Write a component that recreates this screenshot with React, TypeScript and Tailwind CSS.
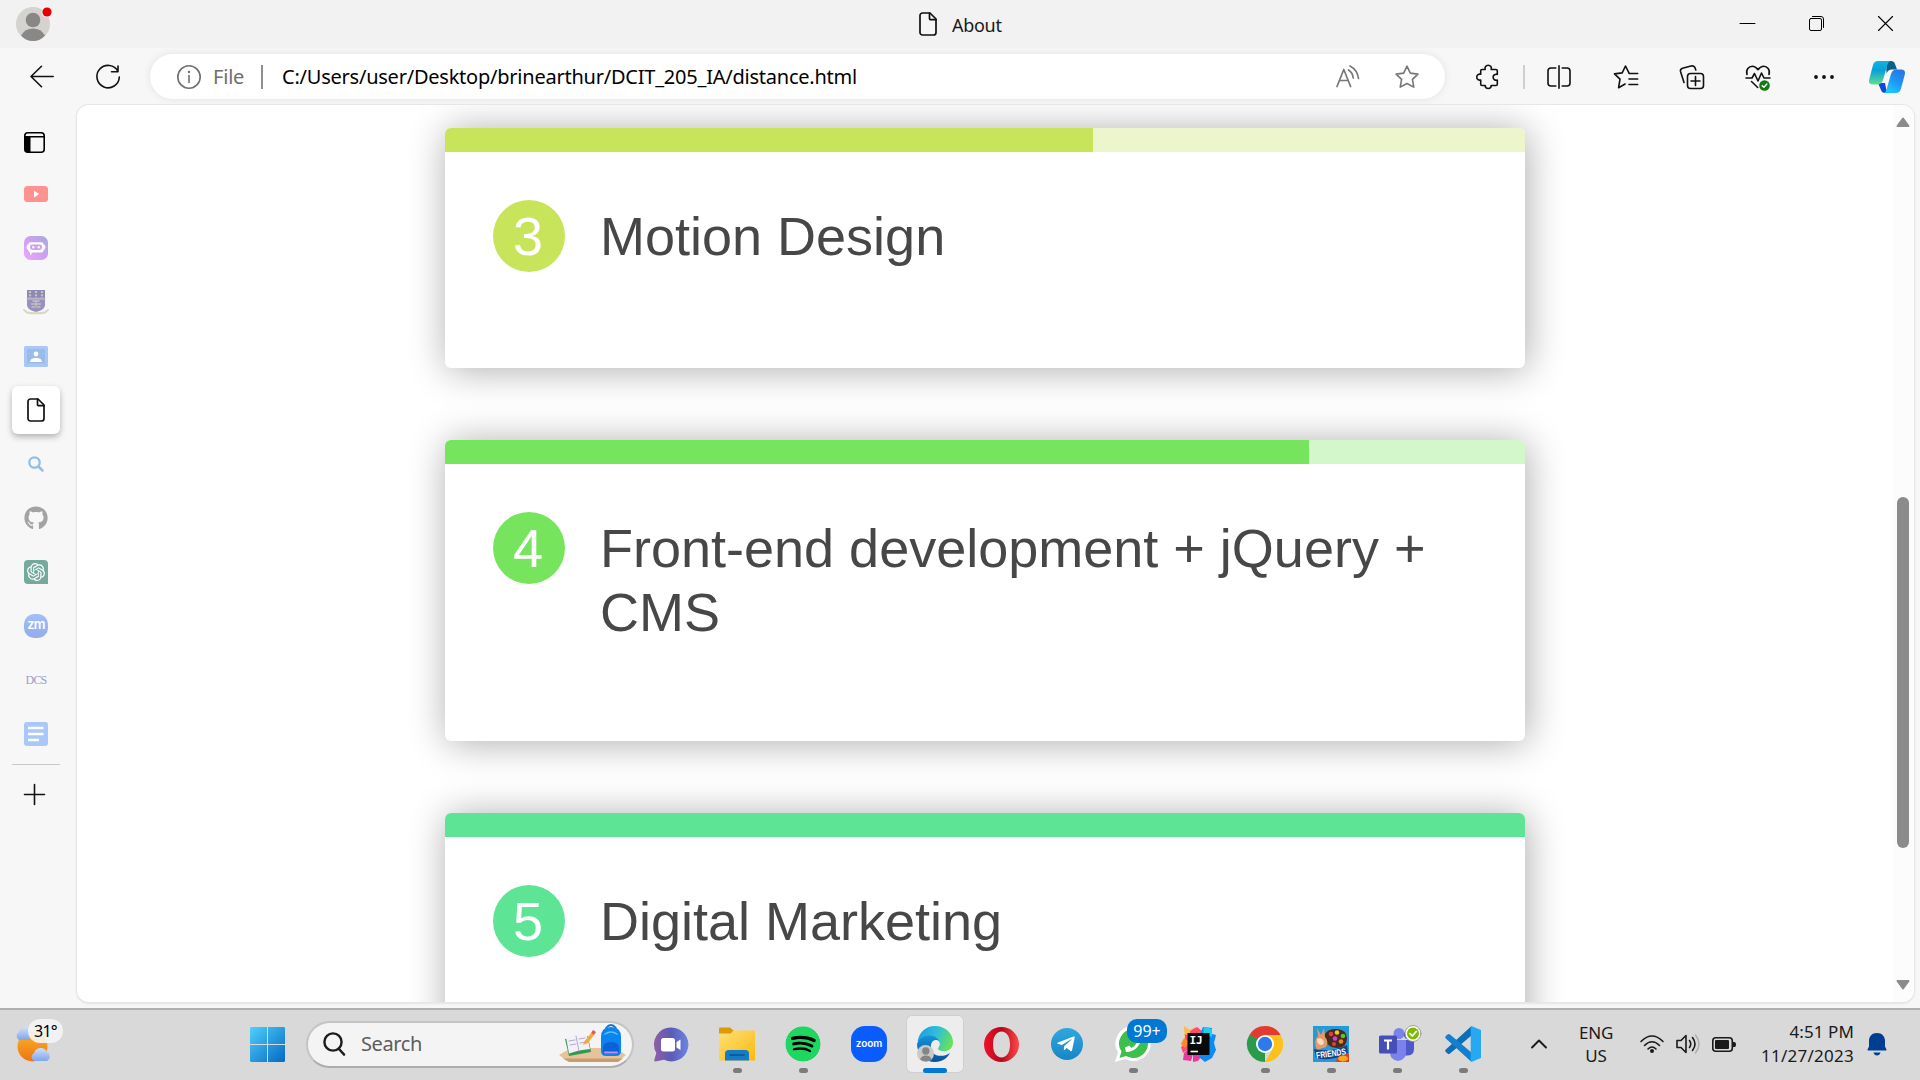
import React from "react";
import { FaGithub, FaSpotify, FaTelegramPlane, FaPhoneAlt } from "react-icons/fa";
import { SiOpenai } from "react-icons/si";

type P = { children: React.ReactNode; className?: string; w: number; h?: number; vb?: string };

function Svg({ children, className = "", w, h = w, vb }: P) {
  return (
    <svg
      width={w}
      height={h}
      viewBox={vb ?? `0 0 ${w} ${h}`}
      className={`block shrink-0 overflow-visible ${className}`}
      fill="none"
      stroke="none"
      strokeLinecap="round"
      strokeLinejoin="round"
    >
      {children}
    </svg>
  );
}

/* ---------- title bar ---------- */

function FileIcon() {
  return (
    <Svg w={18} h={24}>
      <path d="M3.500 1H11l6 6v13.500a2.500 2.500 0 0 1-2.500 2.500h-11A2.500 2.500 0 0 1 1 20.500v-17A2.500 2.500 0 0 1 3.500 1z" fill="#fff" fillOpacity=".35" stroke="#111" strokeWidth="1.700" />
      <path d="M10.500 1v5.500a1.200 1.200 0 0 0 1.200 1.200H17" stroke="#111" strokeWidth="1.700" />
    </Svg>
  );
}

function TitleBar() {
  return (
    <header className="flex h-12 items-center bg-[#f2f2f2]">
      <div className="ml-4 w-[903px]">
        <Svg w={36}>
          <circle cx="17" cy="18" r="17" fill="#d5d3d0" />
          <circle cx="17" cy="14" r="7.300" fill="#8a8886" />
          <path d="M5 29.500Q9 22.500 17 22.500T29 29.500Q24 35 17 35T5 29.500z" fill="#8a8886" />
          <circle cx="31" cy="6" r="5.500" fill="#f2f2f2" />
          <circle cx="31" cy="6" r="4.600" fill="#e30000" />
        </Svg>
      </div>
      <FileIcon />
      <span className="ml-[15px] mt-0.5 w-[788px] text-[18px] tracking-[-0.3px] text-[#1a1a1a]">About</span>
      <div className="flex h-12 gap-[54px]">
        <Svg w={15} h={48}><path d="M0 23.500h15" stroke="#000" strokeWidth="1" /></Svg>
        <Svg w={15} h={48}>
          <rect x=".5" y="18.500" width="12" height="12" rx="1.500" stroke="#000" />
          <path d="M3.500 16.500h8.500a2.500 2.500 0 0 1 2.500 2.500v8.500" stroke="#000" />
        </Svg>
        <Svg w={15} h={48}><path d="M.5 16.500l14 14M14.500 16.500l-14 14" stroke="#000" strokeWidth="1.100" /></Svg>
      </div>
    </header>
  );
}

/* ---------- toolbar ---------- */

function Toolbar() {
  return (
    <div className="flex h-14 items-center bg-[#f7f7f7] pt-px">
      <div className="ml-[30px] w-[66px]">
        <Svg w={24}><path d="M23.200 11.500H1M11.500 1.300L1 11.500l10.500 10.200" stroke="#111" strokeWidth="1.600" /></Svg>
      </div>
      <div className="w-[54px]">
        <Svg w={24}>
          <path d="M22 6.300A11.200 11.200 0 1 0 23.300 12M22 1v5.800h-6.500" stroke="#111" strokeWidth="1.600" />
        </Svg>
      </div>
      <div className="flex h-[45px] w-[1295px] items-center rounded-full bg-white shadow-[0_0_8px_rgba(0,0,0,0.09)]">
        <Svg w={24} className="ml-[27px]">
          <circle cx="12" cy="12" r="11.200" stroke="#707070" strokeWidth="1.600" />
          <path d="M12 10.500v7" stroke="#707070" strokeWidth="1.600" />
          <circle cx="12" cy="7" r="1.200" fill="#707070" />
        </Svg>
        <span className="ml-3 w-[48px] text-[20px] tracking-[-0.2px] text-[#6e6e6e]">File</span>
        <div className="h-6 w-[2px] bg-[#8f8f8f]" />
        <span className="ml-[19px] w-[1054px] whitespace-nowrap text-[20px] tracking-[-0.23px] text-black">
          C:/Users/user/Desktop/brinearthur/DCIT_205_IA/distance.html
        </span>
        <Svg w={24}>
          <path d="M1 21.500L7.800 4.500l6.800 17M3.500 15.500h8.600M12.500 5Q17 8 17.200 13M14 1Q21.500 5 22.500 13.500" stroke="#777" strokeWidth="1.700" />
        </Svg>
        <Svg w={24} className="ml-[35px]">
          <path d="M12 1.200l3.300 6.900 7.600 1-5.500 5.300 1.400 7.700L12 18.500l-6.800 3.600 1.400-7.700L1.100 9.100l7.600-1z" stroke="#777" strokeWidth="1.600" />
        </Svg>
      </div>
      <Svg w={24} className="ml-[31px]">
        <path d="M6 4.500h3.200a3.200 3.200 0 1 1 6 0H20q1.300 0 1.300 1.300V9.500a3 3 0 1 0 0 5.500v4.200q0 1.300-1.300 1.300h-4.800a3 3 0 0 1-6 0H6q-1.300 0-1.300-1.300V15a3 3 0 1 1 0-5.700V5.800Q4.700 4.500 6 4.500z" stroke="#111" strokeWidth="1.600" />
      </Svg>
      <div className="ml-[23px] h-6 w-[2px] bg-[#cfcfcf]" />
      <Svg w={24} className="ml-[22px]">
        <path d="M8.800 3H4a3 3 0 0 0-3 3v12a3 3 0 0 0 3 3h4.800M15.200 3H20a3 3 0 0 1 3 3v12a3 3 0 0 1-3 3h-4.800M12 .8v22.400" stroke="#111" strokeWidth="1.600" />
      </Svg>
      <Svg w={26} h={24} className="ml-[42px]">
        <path d="M15.800 7.700L12.500 1 9.200 7.900l-7.700 1 5.500 5.300-1.400 8.500 6.500-3.700M16 8.500h8.700M16 14h8.700M16 19.500h8.700" stroke="#111" strokeWidth="1.600" />
      </Svg>
      <Svg w={26} h={24} className="ml-10">
        <rect x="8.500" y="8.500" width="16" height="15" rx="3" stroke="#111" strokeWidth="1.600" />
        <path d="M16.500 11.500v9M12 16h9M5 17.500L1.500 6.500Q1 4 3.500 3.200L12 1q2.500-.6 3.800 1.200l1 2.800" stroke="#111" strokeWidth="1.600" />
      </Svg>
      <Svg w={26} h={24} className="ml-10">
        <path d="M2 9.500C.5 4.500 4 1.300 7.300 1.300c2.500 0 4.200 1.500 5.700 3.400 1.500-1.900 3.200-3.400 5.700-3.400C22 1.300 25.500 4.500 24 9.500M1 13h6l2.500-4.500 3.500 7.500 3.500-8 2.500 5h6M6.500 16.500l6.200 6" stroke="#111" strokeWidth="1.600" />
        <circle cx="19.500" cy="20.500" r="5.300" fill="#107c10" />
        <path d="M17.200 20.700l1.700 1.600 3-3.300" stroke="#fff" strokeWidth="1.400" />
      </Svg>
      <Svg w={20} h={24} className="ml-[43px]">
        <circle cx="2" cy="12" r="1.900" fill="#111" />
        <circle cx="10" cy="12" r="1.900" fill="#111" />
        <circle cx="18" cy="12" r="1.900" fill="#111" />
      </Svg>
      <Svg w={36} h={32} className="ml-[35px]">
        <defs>
          <linearGradient id="cpA" x1="0" y1="0" x2="0" y2="1">
            <stop offset="0" stopColor="#11b5d8" /><stop offset=".4" stopColor="#08a0dc" /><stop offset="1" stopColor="#5fe08a" />
          </linearGradient>
          <linearGradient id="cpB" x1="1" y1="0" x2=".4" y2="1">
            <stop offset="0" stopColor="#2f6fda" /><stop offset=".5" stopColor="#1e90f5" /><stop offset="1" stopColor="#1cc8ff" />
          </linearGradient>
        </defs>
        <path d="M17 0h5q3 0 4 3l2 5.500h-5q-4 0-5.500 4z" fill="#0c5f8a" />
        <path d="M9 22h7l2 10h-2q-3 0-4-3z" fill="#1545d8" />
        <path d="M9 0h13q-2.500 0-3.500 3.500L14 19q-1.500 4.500-6 4.500H4q-5 0-3.800-5L4 4Q5.200 0 9 0z" fill="url(#cpA)" />
        <path d="M27 8.500h5q5 0 3.800 5L32 27.500Q30.800 32 27 32H14q2.500 0 3.500-3.500L22 13q1.500-4.500 5-4.500z" fill="url(#cpB)" />
      </Svg>
    </div>
  );
}

/* ---------- vertical tabs ---------- */

function Tab({ children, active = false }: { children: React.ReactNode; active?: boolean }) {
  return (
    <div className="flex h-[54px] items-center justify-center">
      {active ? (
        <div className="flex h-12 w-12 items-center justify-center rounded-[6px] bg-white shadow-[0_3px_6px_rgba(0,0,0,0.28)]">{children}</div>
      ) : (
        children
      )}
    </div>
  );
}

function Sidebar() {
  return (
    <nav className="flex w-[77px] shrink-0 flex-col bg-[#f7f7f7] pr-[5px] pt-3">
      <div className="flex h-[50px] items-center justify-center pr-[3px]">
        <Svg w={21}>
          <rect x=".8" y=".8" width="19.400" height="19.400" rx="3" stroke="#000" strokeWidth="1.600" />
          <path d="M1 5h5.500v15H3a2 2 0 0 1-2-2z" fill="#000" />
          <path d="M1 4.800h19" stroke="#000" strokeWidth="1.500" />
        </Svg>
      </div>
      <Tab>
        <Svg w={24} h={16}><rect width="24" height="16" rx="3.500" fill="#ff9191" /><path d="M10 4.800v6.600l5.300-3.300z" fill="#fff" /></Svg>
      </Tab>
      <Tab>
        <Svg w={24}>
          <defs><linearGradient id="poe" x1="1" y1="0" x2="0" y2="1"><stop stopColor="#a3abe0" /><stop offset=".5" stopColor="#cfa0f0" /><stop offset="1" stopColor="#eaa8ff" /></linearGradient></defs>
          <rect width="24" height="24" rx="6.500" fill="url(#poe)" />
          <path d="M6.500 6.300h11q2 0 2.200 2.200 1.800.4 1.800 2.700t-1.800 2.700q-.2 2.700-2.700 2.700H8.500L6 19.500v-3q-1.600-.6-1.800-2.600-1.700-.4-1.700-2.700t1.700-2.700q.2-2.200 2.300-2.200z" fill="#fff" />
          <rect x="6" y="8.400" width="12" height="5.600" rx="2.400" fill="#cda0ee" />
          <circle cx="9.300" cy="11.200" r="1.200" fill="#fff" /><circle cx="14.700" cy="11.200" r="1.200" fill="#fff" />
        </Svg>
      </Tab>
      <Tab>
        <Svg w={24}>
          <path d="M3 0h18v15q0 5-9 7-9-2-9-7z" fill="#9691bf" />
          <path d="M3 0h18v7H3z" fill="#8c89b5" />
          <path d="M6 1v7M12 1v7M18 1v7" stroke="#c9bfc4" strokeWidth="2.200" strokeDasharray="2 1.200" strokeLinecap="butt" />
          <path d="M3 8.800h18M9 11h6M7.500 14h9M8 17h2.500M13.500 17H16M12 12v5" stroke="#c8bfc0" strokeWidth="1.300" />
          <path d="M0 20l3 2.500q9 1.700 18 0l3-2.500" stroke="#dcd5c4" strokeWidth="2" />
        </Svg>
      </Tab>
      <Tab>
        <Svg w={24} h={21}>
          <rect width="24" height="21" rx="1.500" fill="#a9c7f7" /><rect x="3" y="3" width="18" height="14.500" fill="#9bbbe9" />
          <circle cx="12" cy="8" r="2.400" fill="#fff" /><path d="M6 16q0-4 6-4t6 4z" fill="#fff" />
        </Svg>
      </Tab>
      <Tab active><FileIcon /></Tab>
      <Tab>
        <Svg w={16}><circle cx="6.500" cy="6.500" r="5.200" stroke="#93bfe3" strokeWidth="2.300" /><path d="M10.500 10.500l4 4" stroke="#93bfe3" strokeWidth="2.500" /></Svg>
      </Tab>
      <Tab><FaGithub size={24} color="#a2a3a5" /></Tab>
      <Tab>
        <div className="flex h-6 w-6 items-center justify-center rounded-[4px] rounded-br-none bg-[#74aa9c]"><SiOpenai size={18} color="#fff" /></div>
      </Tab>
      <Tab>
        <div className="flex h-6 w-6 items-center justify-center rounded-[10px] bg-linear-to-b from-[#a2bffb] to-[#92ade9] pb-[3px] font-['Inter'] text-[13px] font-semibold leading-none tracking-[-0.7px] text-white">zm</div>
      </Tab>
      <Tab><span className="font-['Liberation_Serif'] text-[12px] tracking-[-0.8px] text-[#9b9bd0]">DCS</span></Tab>
      <Tab>
        <Svg w={24}><rect width="24" height="24" rx="3" fill="#a9c7f8" /><path d="M4 6h15.500M4 12h15.500M4 18h11" stroke="#fff" strokeWidth="2.600" strokeLinecap="butt" /></Svg>
      </Tab>
      <div className="mx-3 mt-[3px] h-px bg-[#c8c8c8]" />
      <div className="mt-[19px] flex justify-center pr-[3px]">
        <Svg w={21}><path d="M10.500.5v20M.5 10.500h20" stroke="#111" strokeWidth="1.600" /></Svg>
      </div>
    </nav>
  );
}

/* ---------- page content ---------- */

type Course = { n: number; title: string; height: string; fill: string; track: string; width: string };

const courses: Course[] = [
  { n: 3, title: "Motion Design", height: "h-[240px]", fill: "bg-[#c8e45b]", track: "bg-[#ecf5cb]", width: "w-[60%]" },
  { n: 4, title: "Front-end development + jQuery + CMS", height: "h-[301px]", fill: "bg-[#76e55d]", track: "bg-[#d3f6cb]", width: "w-[80%]" },
  { n: 5, title: "Digital Marketing", height: "h-[301px]", fill: "bg-[#5de595]", track: "bg-[#5de595]", width: "w-full" },
];

function CourseCard({ c }: { c: Course }) {
  return (
    <article className={`w-[1080px] shrink-0 overflow-hidden rounded-[6px] bg-white shadow-[2px_2px_38px_rgba(0,0,0,0.33)] ${c.height}`}>
      <div className={`h-6 ${c.track}`}>
        <div className={`h-6 ${c.fill} ${c.width}`} />
      </div>
      <div className="flex gap-[35px] px-12 pt-12 font-['Liberation_Sans',sans-serif] text-[54px]">
        <div className={`flex h-[72px] w-[72px] shrink-0 items-center justify-center rounded-full pr-[2px] text-white ${c.fill}`}>{c.n}</div>
        <h2 className="pt-1 leading-[64px] text-[#474747]">{c.title}</h2>
      </div>
    </article>
  );
}

function Page() {
  return (
    <main className="mr-[6px] flex h-[897px] flex-1 overflow-hidden rounded-[12px] bg-white shadow-[0_0_0_1px_#e6e6e6,0_1px_3px_rgba(0,0,0,0.15)]">
      <div className="flex flex-1 flex-col items-center gap-[72px] overflow-hidden pl-0 pt-[23px]">
        {courses.map((c) => <CourseCard key={c.n} c={c} />)}
      </div>
      <div className="flex w-[21px] flex-col items-center bg-[#fcfcfc] pr-px pt-3">
        <Svg w={14} h={10}><path d="M7 1.500l5.500 7.500h-11z" fill="#8b8b8b" stroke="#8b8b8b" strokeWidth="2" /></Svg>
        <div className="mt-[370px] h-[351px] w-3 rounded-full bg-[#8b8b8b]" />
        <Svg w={14} h={10} className="mt-[132px]"><path d="M7 8.500L1.500 1h11z" fill="#8b8b8b" stroke="#8b8b8b" strokeWidth="2" /></Svg>
      </div>
    </main>
  );
}

/* ---------- taskbar ---------- */

function TaskApp({ children, running = false, active = false }: { children: React.ReactNode; running?: boolean; active?: boolean }) {
  return (
    <div className="flex w-[66px] justify-center">
      <div className={`relative flex h-[56px] w-[56px] items-center justify-center rounded-[5px] ${active ? "bg-[#ededed] shadow-[0_0_0_1px_#cfcfcf]" : ""}`}>
        {children}
        {running && <div className={`absolute bottom-[-1px] h-[5px] rounded-full ${active ? "w-6 bg-[#0078d4]" : "w-[9px] bg-[#7b7b7b]"}`} />}
      </div>
    </div>
  );
}

function Apps() {
  return (
    <>
      <TaskApp>
        <Svg w={35}>
          <defs><linearGradient id="chat" x1="0" x2="1"><stop stopColor="#8d5fa5" /><stop offset=".5" stopColor="#5b5bb8" /><stop offset="1" stopColor="#6d86e0" /></linearGradient></defs>
          <path d="M17.500.5a17 17 0 1 1-7.500 32.300L1.500 34.500Q0 34.500.3 33l2-7A17 17 0 0 1 17.500.5z" fill="url(#chat)" />
          <rect x="7" y="11" width="14" height="13.500" rx="2.500" fill="#fff" /><path d="M22.500 15l4-2.500v10.500l-4-2.500z" fill="#fff" />
        </Svg>
      </TaskApp>
      <TaskApp running>
        <Svg w={36} h={34}>
          <defs><linearGradient id="fold" x1="0" y1="0" x2="1" y2="1"><stop stopColor="#ffe077" /><stop offset="1" stopColor="#fbb90f" /></linearGradient></defs>
          <path d="M0 1.500Q0 .5 1 .5h10l4 3.500v5H0z" fill="#dc9a06" />
          <path d="M0 6.500h11.500l3-3H36v30H0z" fill="url(#fold)" />
          <path d="M6 33.500v-7q0-3.500 3.500-3.500h17q3.500 0 3.500 3.500v7z" fill="#147cc5" /><path d="M11 28h14" stroke="#0b4f94" strokeWidth="1.600" />
        </Svg>
      </TaskApp>
      <TaskApp running>
        <div className="flex h-[34px] w-[34px] items-center justify-center rounded-full bg-black"><FaSpotify size={36} color="#1ed760" className="shrink-0" /></div>
      </TaskApp>
      <TaskApp>
        <div className="flex h-9 w-9 items-center justify-center rounded-[14px] bg-[#0b5cff] pb-[3px] font-['Inter'] text-[10px] font-semibold leading-none text-white">zoom</div>
      </TaskApp>
      <TaskApp running active>
        <Svg w={36}>
          <defs>
            <linearGradient id="edA" x1="0" y1=".3" x2="1" y2=".6"><stop stopColor="#1c9de8" /><stop offset=".5" stopColor="#30c0d5" /><stop offset="1" stopColor="#6be352" /></linearGradient>
            <linearGradient id="edB" x1="0" y1="0" x2="0" y2="1"><stop stopColor="#1793d9" /><stop offset="1" stopColor="#0a4f9c" /></linearGradient>
          </defs>
          <path d="M.5 16C2 6 9 0 18 0c11 0 18 8 18 16 0 6-4 9.500-9.500 9.500-4 0-6-1.500-6-2.500 0-1.200 2-2 2-5C22.500 12 14 8.500.5 16z" fill="url(#edA)" />
          <path d="M0 18C3 10 12 7.500 18 11c4 2 5 5 4.500 7.500-.8-3-7-4.500-8.500 1.500-2 9 10 13 19 7-3 5.500-8 9-15 9C8 36 0 28 0 18z" fill="url(#edB)" />
          <path d="M14 21c-.5-6 4-8 7-6.500 2.500 1.500 2 4.500.8 6-2 2.500 0 4.500 4.700 5 3 .2 5-.7 6.500-1.200.8 1-.5 2.700-2 3-8 2.500-16-.8-17-6.300z" fill="#ededed" />
          <circle cx="8.500" cy="27.500" r="8.500" fill="#c9c9c9" /><circle cx="8.800" cy="25" r="3.700" fill="#858585" /><path d="M3 33.500q1.500-4 6-4t5.500 4q-5 3.800-11.500 0z" fill="#858585" />
        </Svg>
      </TaskApp>
      <TaskApp>
        <Svg w={35}>
          <defs><linearGradient id="op" x1="0" x2="1"><stop stopColor="#f0142a" /><stop offset=".5" stopColor="#b8061a" /><stop offset="1" stopColor="#ff4a4a" /></linearGradient></defs>
          <path fillRule="evenodd" d="M17.500 0a17.500 17.500 0 1 1 0 35 17.500 17.500 0 0 1 0-35zm0 4.500c-5 0-8.500 5-8.500 13s3.500 13 8.500 13 8.500-5 8.500-13-3.500-13-8.500-13z" fill="url(#op)" />
        </Svg>
      </TaskApp>
      <TaskApp>
        <div className="flex h-8 w-8 items-center justify-center rounded-full bg-linear-to-b from-[#30a7e0] to-[#1686c4] pr-[2px]"><FaTelegramPlane size={20} color="#fff" /></div>
      </TaskApp>
      <TaskApp running>
        <Svg w={36}>
          <path d="M18.500 0a17.500 17.500 0 1 1-8.300 33L0 36l3-9.500A17.500 17.500 0 0 1 18.500 0z" fill="#fff" />
          <path d="M18.500 3a14.500 14.500 0 1 1-7.300 27L4.500 31.800l2-6.300A14.500 14.500 0 0 1 18.500 3z" fill="#3cbf4d" />
        </Svg>
        <FaPhoneAlt size={16} color="#fff" className="absolute -scale-x-100" />
        <div className="absolute left-[22px] top-[3px] flex h-6 w-10 items-center justify-center rounded-[10px] bg-[#0078d4] pb-px text-[16px] text-white">99+</div>
      </TaskApp>
      <TaskApp>
        <Svg w={36}>
          <path d="M3 0l6 4 5-3 3 4v14H4z" fill="#ffb84a" />
          <path d="M9 5l7-4 5 4v10H9zM4 8l6 3v10l-8 6-2-6 4-3z" fill="#ff4b6e" />
          <path d="M3 27l9-9v10l-2 7-8-1zM12 28h10l-5 7-5 1z" fill="#e83a9c" />
          <path d="M3 12l-3 6 4 4 4-6z" fill="#ff8a1f" />
          <path d="M22 1l9 1v6l4 1-2 8 2 7-4 8-7 4-5-4V8z" fill="#0b8cf5" /><path d="M23 1l8 2v8l-9-3z" fill="#19d1ec" />
          <rect x="6.500" y="7" width="22" height="22" fill="#090909" />
          <text x="8.500" y="18" fill="#fff" fontFamily="DejaVu Sans Mono" fontWeight="bold" fontSize="11">IJ</text>
          <path d="M9.500 25.500h7.500" stroke="#fff" strokeWidth="1.600" strokeLinecap="butt" />
        </Svg>
      </TaskApp>
      <TaskApp running>
        <Svg w={36}>
          <path d="M18 18L2.400 9A18 18 0 0 1 33.600 9z" fill="#e23c30" />
          <path d="M18 18V36A18 18 0 0 1 2.400 9z" fill="#2a9a4b" />
          <path d="M10.200 22.500L2.400 9l8.600 4z" fill="#2a9a4b" />
          <path d="M18 9h15.600a18 18 0 0 1-15.600 27l7.800-13.500z" fill="#fcc21b" />
          <circle cx="18" cy="18" r="9" fill="#fff" /><circle cx="18" cy="18" r="7.200" fill="#2d7bea" />
        </Svg>
      </TaskApp>
      <TaskApp running>
        <Svg w={36}>
          <rect width="36" height="36" fill="#259ad8" />
          <path d="M11 10q3-8 13-7 10 1 10 9 0 9-9 10-12 0-14-12z" fill="#4a2a1c" />
          <circle cx="18" cy="8" r="2.300" fill="#e93c32" /><circle cx="24" cy="6.500" r="2.300" fill="#f5c623" /><circle cx="30" cy="10" r="2.300" fill="#5ec32c" /><circle cx="22" cy="12.500" r="2.300" fill="#c548d8" /><circle cx="28" cy="15.500" r="2.300" fill="#f0822a" /><circle cx="21" cy="18" r="2" fill="#e93c32" />
          <path d="M4 2l4 7 3-7 1 9q4 4 1 10l-9 3Q0 15 5 10z" fill="#e89a62" /><path d="M4 13q4-2 6 1t-1 5q-5 0-5-6z" fill="#f8ddc8" />
          <path d="M1 23q17 4 33-4l1 8q-16 9-32 5z" fill="#16448a" />
          <text x="3" y="30.500" transform="rotate(-8 18 28)" fill="#fff" fontFamily="Liberation Sans" fontWeight="bold" fontSize="9" textLength="30" lengthAdjust="spacingAndGlyphs">FRIENDS</text>
          <path d="M23 36q0-7 13-8v8z" fill="#d9401f" /><ellipse cx="30" cy="32.500" rx="5" ry="3" fill="#ffa31a" />
        </Svg>
      </TaskApp>
      <TaskApp running>
        <Svg w={36}>
          <circle cx="20" cy="7.500" r="5.500" fill="#7b83eb" /><circle cx="29" cy="9" r="4.200" fill="#5059c9" />
          <path d="M24 14h11v9q0 6-6 6.500h-5z" fill="#5059c9" />
          <path d="M11 14h16v12q0 8-8 9-8-1-8-9z" fill="#7b83eb" />
          <rect x="0" y="9.500" width="18" height="18" rx="1.500" fill="#464eb8" />
          <path d="M5 14.500h8M9 14.500v9" stroke="#fff" strokeWidth="2.200" strokeLinecap="butt" />
          <circle cx="34" cy="7.500" r="8" fill="#fff" stroke="#888" strokeWidth=".8" /><circle cx="34" cy="7.500" r="6" fill="#7fba00" />
          <path d="M31 7.700l2.300 2.300 4-4.500" stroke="#fff" strokeWidth="1.700" />
        </Svg>
      </TaskApp>
      <TaskApp running>
        <Svg w={36}>
          <path d="M26.500 0v9.500L5 27.500q-1.300 1-2.500 0L.8 26q-1.300-1.300 0-2.500z" fill="#0a6fb8" />
          <path d="M26.500 36v-9.500L5 8.500q-1.300-1-2.500 0L.8 10q-1.300 1.300 0 2.500z" fill="#1280cc" />
          <path d="M26.500 0L36 4v28l-9.500 4q-.8-1-.8-2V2q0-1 .8-2z" fill="#27a8f3" />
        </Svg>
      </TaskApp>
    </>
  );
}

function Taskbar() {
  return (
    <footer className="flex h-[72px] items-center border-t-2 border-[#b0b0b0] bg-[#d9d9d9] pb-[2px] text-[#1a1a1a]">
      <div className="relative ml-[14px] w-[236px]">
        <Svg w={40} h={44}>
          <defs>
            <linearGradient id="sun" x1="0" y1="0" x2="0" y2="1"><stop stopColor="#f9b42d" /><stop offset="1" stopColor="#ee7411" /></linearGradient>
            <linearGradient id="cl" x1="0" y1="0" x2="0" y2="1"><stop stopColor="#cfdffc" /><stop offset="1" stopColor="#7fa5ea" /></linearGradient>
          </defs>
          <circle cx="18.500" cy="24.500" r="15" fill="url(#sun)" />
          <path d="M5 18a4.500 4.500 0 0 1 0-8 6 6 0 0 1 11-2v10z" fill="url(#cl)" />
          <path d="M20 39a4.500 4.500 0 0 1 0-8 7 7 0 0 1 13-1 5 5 0 0 1 0 9z" fill="url(#cl)" />
        </Svg>
        <div className="absolute left-[14px] top-[-3px] flex h-[24px] w-[35px] items-center justify-center rounded-full bg-[#f4f4f4]/90 text-[16px] tracking-[-0.7px] text-black">31°</div>
      </div>
      <Svg w={35}>
        <defs><linearGradient id="win" x1="0" y1="0" x2="1" y2="1"><stop stopColor="#4fd0fb" /><stop offset="1" stopColor="#0468c4" /></linearGradient></defs>
        <path d="M1 0h16v17H0V1zM18 0h16l1 1v16H18zM0 18h17v17H1l-1-1zM18 18h17v16l-1 1H18z" fill="url(#win)" />
      </Svg>
      <div className="ml-[21px] mr-[4px] flex h-[47px] w-[328px] shrink-0 items-center rounded-full border-2 border-[#c4c4c4] border-b-[#adadad] bg-[#f4f4f4]">
        <Svg w={22} h={24} className="ml-[15px]">
          <circle cx="10" cy="10" r="8.600" stroke="#1c1c1c" strokeWidth="2.400" /><path d="M16 17l5 5.500" stroke="#1c1c1c" strokeWidth="2.600" />
        </Svg>
        <span className="ml-4 w-[198px] text-[20px] tracking-[-0.4px] text-[#5c5c5c]">Search</span>
        <Svg w={68} h={38}>
          <path d="M0 30l12-7h44l11 7-7 6H8z" fill="#e6c39a" /><path d="M4 33.500h60l-5 3.500H10z" fill="#c79c70" />
          <path d="M6 14l23-3 3 16-22 4z" fill="#2e9a50" /><path d="M7 12l10-1.500L28 10l3 14-11 1.500-10 3z" fill="#f3f0fa" />
          <path d="M17 11l3 15M10 16l6-1M11 20l6-1M20 14l6-1M21 18l6-1" stroke="#b4abc9" strokeWidth="1" />
          <path d="M25 17l7-9 3 2-6 8-5 2z" fill="#f5a83c" /><path d="M32 8l2-3 3 2-2 3z" fill="#ef5350" />
          <path d="M47 3q5-6 10 0" stroke="#1976d2" strokeWidth="1.800" />
          <path d="M42 12q0-10 10-10t10 10v14q0 5-5 5H47q-5 0-5-5z" fill="#0a84f0" /><path d="M46 9q6-4 12 0" stroke="#63c1ff" strokeWidth="1.500" />
          <path d="M44 23q0-6 8-6t8 6v4q0 2-2 2H46q-2 0-2-2z" fill="#0b62d6" /><path d="M46 27.500h12" stroke="#c38bff" strokeWidth="2" />
        </Svg>
      </div>
      <Apps />
      <Svg w={16} h={10} className="ml-[35px]"><path d="M1 8.500l7-7 7 7" stroke="#1a1a1a" strokeWidth="1.900" /></Svg>
      <div className="ml-[24px] w-[50px] text-center text-[17px] leading-[23px] tracking-[-0.2px]">ENG<br />US</div>
      <Svg w={24} h={18} className="ml-[19px]">
        <path d="M1 6.500q11-11 22 0M4.500 10.500q7.500-7.500 15 0M8 14q4-4 8 0" stroke="#1a1a1a" strokeWidth="1.600" /><circle cx="12" cy="16" r="2" fill="#1a1a1a" />
      </Svg>
      <Svg w={24} h={20} className="ml-3">
        <path d="M1 6.500h4l5-5v17l-5-5H1z M13.500 6.500q2.500 3.500 0 7M16.500 3.500q5 6.500 0 13" stroke="#1a1a1a" strokeWidth="1.600" /><path d="M19.500 1q7 9 0 18" stroke="#b0b0b0" strokeWidth="1.600" />
      </Svg>
      <Svg w={24} h={15} className="ml-3">
        <rect x=".8" y=".8" width="19.500" height="13.400" rx="3" stroke="#1a1a1a" strokeWidth="1.600" /><rect x="3" y="3" width="14" height="9" rx="1" fill="#1a1a1a" /><path d="M21 5h1.500q1.500 0 1.500 2.500T22.500 10H21z" fill="#1a1a1a" />
      </Svg>
      <div className="ml-[18px] w-[100px] whitespace-nowrap text-right text-[17px] leading-[24px] tracking-[0.25px]">
        <div className="tracking-[0.1px]">4:51 PM</div>
        <div>11/27/2023</div>
      </div>
      <Svg w={20} h={24} className="ml-[13px]">
        <path d="M10 1c5 0 8 3.500 8 8v5.500l1.500 3q.3 1-.8 1H1.300q-1.100 0-.8-1L2 14.500V9c0-4.500 3-8 8-8zM6.500 20.500h7q-.8 3-3.500 3t-3.500-3z" fill="#003e92" />
      </Svg>
    </footer>
  );
}

export default function App() {
  return (
    <div className="flex h-[1080px] w-[1920px] flex-col overflow-hidden bg-[#f7f7f7] font-['Noto_Sans',sans-serif]">
      <TitleBar />
      <Toolbar />
      <div className="flex h-[904px] pt-px">
        <Sidebar />
        <Page />
      </div>
      <Taskbar />
    </div>
  );
}
